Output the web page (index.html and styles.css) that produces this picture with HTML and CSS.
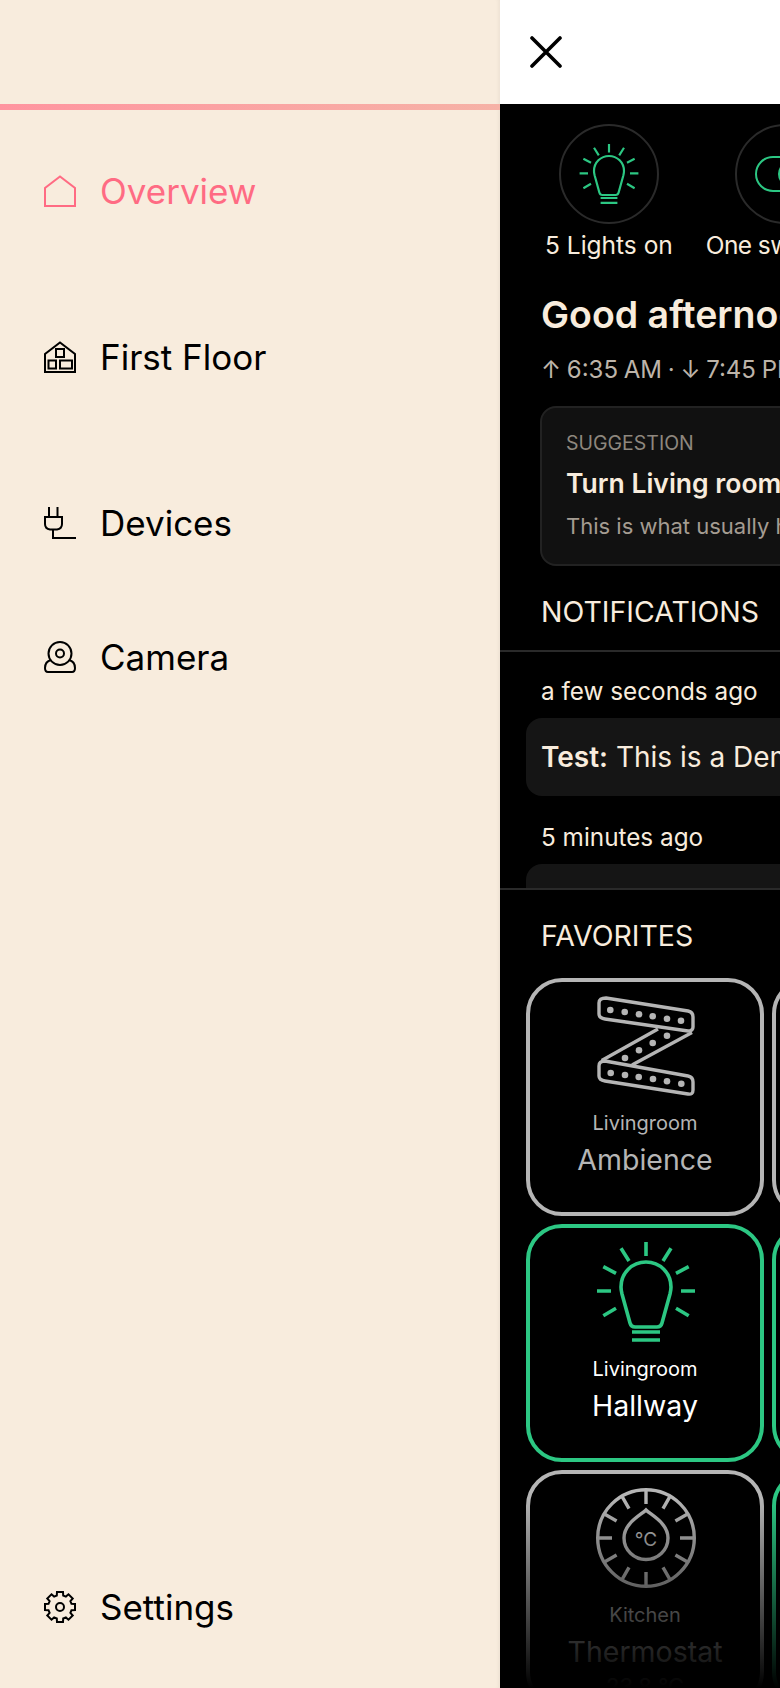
FILE: index.html
```html
<!DOCTYPE html>
<html lang="en">

<head>
  <meta charset="UTF-8">
  <meta name="viewport" content="width=device-width, initial-scale=1.0">
  <title>Smart Home</title>
  <link rel="stylesheet" href="styles.css">
</head>

<body>
  <svg class="defs" width="0" height="0">
    <symbol id="bulb" viewBox="0 0 100 100">
      <g fill="none" stroke="currentColor" stroke-width="3.6">
        <path d="M39 85H61Q65 85 66 81L74 52C75 48 75 47 75 45C75 31 64 20 50 20C36 20 25 31 25 45C25 47 25 48 26 52L34 81Q35 85 39 85Z" />
        <path d="M36 90H64M36 98H64" />
        <path d="M50 0V14M25 6.3L33 19M75 6.3L67 19M7.3 24.7L20 31.3M92.7 24.7L80 31.3M1 49H15M85 49H99M7.3 73.7L20 66.3M92.7 73.7L80 66.3" />
      </g>
    </symbol>
  </svg>

  <div class="app">
    <aside class="sidebar">
      <div class="sidebar-top"></div>
      <nav class="nav">
        <a class="nav-item active">
          <svg class="nav-icon" viewBox="0 0 32 32"><path d="M1 31V13L16 1.5L31 13V31Z" /></svg>
          <span>Overview</span>
        </a>
        <a class="nav-item nav-section">
          <svg class="nav-icon" viewBox="0 0 32 32">
            <path d="M1 31V13L16 1.5L31 13V31Z" />
            <path d="M12 8H20V16H12ZM4.5 19.5H12V27.5H4.5ZM16 19.5H28V27.5H16Z" />
          </svg>
          <span>First Floor</span>
        </a>
        <a class="nav-item nav-section">
          <svg class="nav-icon" viewBox="0 0 32 32"><path d="M5 0V10M13.500 0V10M1 10H18V17C18 20 16 22 13 22.500H6C3 22 1 20 1 17ZM9 22.500V31H32" /></svg>
          <span>Devices</span>
        </a>
        <a class="nav-item">
          <svg class="nav-icon" viewBox="0 0 32 32">
            <circle cx="16" cy="12.500" r="11.500" />
            <circle cx="16" cy="12.500" r="4" />
            <path d="M7 19C3 20 1 23 1 27C1 30 2 31 4 31H28C30 31 31 30 31 27C31 23 29 20 25 19" />
          </svg>
          <span>Camera</span>
        </a>
        <a class="nav-item nav-bottom">
          <svg class="nav-icon" viewBox="0 0 32 32">
            <polygon points="12.8,4.5 13,1 19,1 19.2,4.5 21.87,5.61 24.49,3.27 28.73,7.51 26.39,10.13 27.5,12.8 31,13 31,19 27.5,19.2 26.39,21.87 28.73,24.49 24.49,28.73 21.87,26.39 19.2,27.5 19,31 13,31 12.8,27.5 10.13,26.39 7.51,28.73 3.27,24.49 5.61,21.87 4.5,19.2 1,19 1,13 4.5,12.8 5.61,10.13 3.27,7.51 7.51,3.27 10.13,5.61" />
            <circle cx="16" cy="16" r="4" />
          </svg>
          <span>Settings</span>
        </a>
      </nav>
    </aside>

    <main class="panel">
      <header class="panel-top">
        <svg class="close" viewBox="0 0 32 32"><path d="M2 2L30 30M30 2L2 30" /></svg>
      </header>

      <div class="panel-body">
        <div class="chips">
          <div class="chip">
            <div class="chip-circle">
              <svg class="chip-icon"><use href="#bulb" /></svg>
            </div>
            <div class="chip-label">5 Lights on</div>
          </div>
          <div class="chip">
            <div class="chip-circle">
              <svg class="chip-icon" viewBox="0 0 60 60"><rect x="1" y="13" width="58" height="34" rx="17" /><circle cx="36" cy="30" r="12" /></svg>
            </div>
            <div class="chip-label chip-label-tight">One switch on</div>
          </div>
        </div>

        <h1 class="greeting">Good afternoon</h1>
        <div class="sun">↑ 6:35 AM · ↓ 7:45 PM</div>

        <div class="suggestion">
          <div class="suggestion-tag">SUGGESTION</div>
          <div class="suggestion-title">Turn Living room lights on</div>
          <div class="suggestion-text">This is what usually happens at this time</div>
        </div>

        <h2 class="section-title section-notifications">NOTIFICATIONS</h2>
        <div class="notifications">
          <div class="notif-time">a few seconds ago</div>
          <div class="notif-card"><b>Test:</b> This is a Demo notification</div>
          <div class="notif-time">5 minutes ago</div>
          <div class="notif-card"></div>
        </div>

        <h2 class="section-title section-favorites">FAVORITES</h2>
        <div class="tiles">
          <div class="tile">
            <svg class="tile-icon" viewBox="0 0 100 100">
              <g fill="none" stroke="currentColor" stroke-width="3.400">
                <path d="M10 2L92 15Q97 16 97 21V31Q97 35 92 35L9 23Q3 22 3 18V7Q3 2 10 2Z" />
                <path d="M62 33L5.700 64.500M96 36.500L36 69" />
                <path d="M9 65L92 80Q97 81 97 86V94Q97 99 92 98L9 85Q3 84 3 80V70Q3 65 9 65Z" />
              </g>
              <g fill="currentColor">
                <circle cx="14.300" cy="14" r="3.300" /><circle cx="28.700" cy="16" r="3.300" /><circle cx="43" cy="18.300" r="3.300" /><circle cx="56.700" cy="20.300" r="3.300" /><circle cx="71" cy="22.700" r="3.300" /><circle cx="85" cy="24.700" r="3.300" />
                <circle cx="71" cy="39.700" r="3.300" /><circle cx="56.700" cy="47" r="3.300" /><circle cx="43" cy="54.300" r="3.300" /><circle cx="29" cy="62" r="3.300" />
                <circle cx="14.700" cy="77" r="3.300" /><circle cx="29" cy="79" r="3.300" /><circle cx="42.700" cy="81" r="3.300" /><circle cx="57" cy="83" r="3.300" /><circle cx="71" cy="85.300" r="3.300" /><circle cx="85.300" cy="87.700" r="3.300" />
              </g>
            </svg>
            <div class="tile-room">Livingroom</div>
            <div class="tile-name">Ambience</div>
          </div>
          <div class="tile"></div>

          <div class="tile tile-on">
            <svg class="tile-icon"><use href="#bulb" /></svg>
            <div class="tile-room">Livingroom</div>
            <div class="tile-name">Hallway</div>
          </div>
          <div class="tile tile-on"></div>

          <div class="tile">
            <svg class="tile-icon" viewBox="0 0 100 100">
              <g fill="none" stroke="currentColor" stroke-width="3.400">
                <circle cx="50" cy="50" r="48.300" />
                <path d="M50 2V16M74 8.400L67 20.600M91.600 26L79.400 33M98 50H84M91.600 74L79.400 67M74 91.600L67 79.400M50 98V84M26 91.600L33 79.400M8.400 74L20.600 67M2 50H16M8.400 26L20.600 33M26 8.400L33 20.600" />
                <path d="M50 22C55 27 72 35 72 50C72 62 62 71.500 50 71.500C38 71.500 28 62 28 50C28 35 45 27 50 22Z" />
              </g>
              <text class="tile-unit" x="50" y="58" text-anchor="middle">°C</text>
            </svg>
            <div class="tile-room">Kitchen</div>
            <div class="tile-name">Thermostat</div>
            <div class="tile-value">23.8 °C</div>
          </div>
          <div class="tile tile-on"></div>
        </div>
      </div>
      <div class="panel-fade"></div>
    </main>
  </div>
</body>

</html>
```

FILE: styles.css
```css
* {
  box-sizing: border-box;
}

html,
body {
  margin: 0;
  height: 100%;
  overflow: hidden;
}

body {
  font-family: "Inter", "Open Sans", sans-serif;
  background: #000;
}

.defs {
  position: absolute;
}

.app {
  display: flex;
  height: 1688px;
}

/* left drawer */
.sidebar {
  width: 500px;
  flex-shrink: 0;
  display: flex;
  flex-direction: column;
  background: #f8ecdd;
  box-shadow: inset -4px 0 4px -3px rgba(0, 0, 0, 0.06);
}

.sidebar-top {
  height: 110px;
  flex-shrink: 0;
  border-bottom: 6px solid;
  border-image: linear-gradient(90deg, #ff949f, #f6b2a6) 1;
}

.nav {
  flex: 1;
  display: flex;
  flex-direction: column;
  padding: 14px 0 14px 44px;
}

.nav-item {
  height: 134px;
  flex-shrink: 0;
  display: flex;
  align-items: center;
  gap: 24px;
  color: #000;
  font-size: 35px;
}

.nav-section {
  margin-top: 32px;
}

.nav-bottom {
  margin-top: auto;
}

.nav-item.active {
  color: #ff6b83;
}

.nav-icon {
  width: 32px;
  height: 32px;
  flex-shrink: 0;
  fill: none;
  stroke: currentColor;
  stroke-width: 2;
}

/* right side */
.panel {
  position: relative;
  flex: 1;
  min-width: 0;
  overflow: hidden;
  background: #000;
}

.panel-top {
  height: 104px;
  display: flex;
  align-items: center;
  padding-left: 30px;
  background: #fff;
}

.close {
  width: 32px;
  height: 32px;
  fill: none;
  stroke: #000;
  stroke-width: 3.6;
  stroke-linecap: round;
}

.panel-body {
  color: #f8ecdd;
}

.chips {
  display: flex;
  gap: 33px;
  padding: 20px 0 0 45px;
}

.chip {
  flex-shrink: 0;
  display: flex;
  flex-direction: column;
  align-items: center;
}

.chip-circle {
  width: 100px;
  height: 100px;
  display: flex;
  align-items: center;
  justify-content: center;
  border: 2px solid #2a2a2a;
  border-radius: 50%;
  color: #2cc783;
}

.chip-icon {
  width: 60px;
  height: 60px;
  fill: none;
  stroke: currentColor;
  stroke-width: 2;
}

.chip-label {
  margin-top: 6px;
  font-size: 24.5px;
  line-height: 30px;
  white-space: nowrap;
}

.chip-label-tight {
  letter-spacing: -0.6px;
}

.greeting {
  margin: 33px 0 0 41px;
  font-size: 37.5px;
  font-weight: 600;
  line-height: 44px;
  white-space: nowrap;
}

.sun {
  margin: 18px 0 0 41px;
  font-size: 24px;
  word-spacing: -1px;
  line-height: 30px;
  color: #bdb4a9;
  white-space: nowrap;
}

.suggestion {
  width: 640px;
  height: 160px;
  margin: 21px 0 0 40px;
  padding: 23px 24px 0;
  background: #111;
  border: 2px solid #222;
  border-radius: 16px;
  white-space: nowrap;
}

.suggestion-tag {
  font-size: 19.5px;
  line-height: 24px;
  color: #8e877e;
}

.suggestion-title {
  margin-top: 13px;
  font-size: 26.5px;
  font-weight: 600;
  line-height: 30px;
}

.suggestion-text {
  margin-top: 14px;
  font-size: 22px;
  line-height: 28px;
  color: #a49c92;
}

.section-title {
  margin: 0;
  padding-left: 41px;
  font-size: 28.5px;
  font-weight: 400;
  line-height: 36px;
}

.section-notifications {
  margin-top: 28px;
}

.notifications {
  height: 240px;
  overflow: hidden;
  margin-top: 20px;
  padding-top: 24px;
  border-top: 2px solid #2a2a2a;
  border-bottom: 2px solid #2a2a2a;
}

.notif-time {
  padding-left: 41px;
  font-size: 24.3px;
  line-height: 30px;
}

.notif-card {
  width: 640px;
  height: 78px;
  margin: 12px 0 26px 26px;
  padding-left: 15px;
  background: #151515;
  border-radius: 16px;
  font-size: 28px;
  line-height: 78px;
  white-space: nowrap;
}

.notif-card b {
  font-weight: 600;
}

.section-favorites {
  margin-top: 28px;
}

.tiles {
  display: grid;
  grid-template-columns: 238px 238px;
  grid-auto-rows: 238px;
  gap: 8px;
  margin-top: 24px;
  padding-left: 26px;
}

.tile {
  display: flex;
  flex-direction: column;
  align-items: center;
  padding-top: 14px;
  border: 4px solid #b5b5b5;
  border-radius: 36px;
  color: #b5b5b5;
}

.tile-on {
  border-color: #2cc783;
  color: #fff;
}

.tile-icon {
  width: 100px;
  height: 100px;
  flex-shrink: 0;
  margin-left: 2px;
}

.tile-on .tile-icon {
  color: #2cc783;
}

.tile-unit {
  font-size: 19px;
  fill: currentColor;
}

.tile-room {
  margin-top: 13px;
  font-size: 20px;
  line-height: 28px;
}

.tile-name {
  margin-top: 4px;
  font-size: 28.5px;
  line-height: 38px;
}

.tile-value {
  font-size: 22px;
  line-height: 30px;
}

/* bottom fade over the tiles */
.panel-fade {
  position: absolute;
  left: 0;
  right: 0;
  bottom: 0;
  height: 190px;
  background: linear-gradient(180deg, rgba(0, 0, 0, 0), #000);
}
```
